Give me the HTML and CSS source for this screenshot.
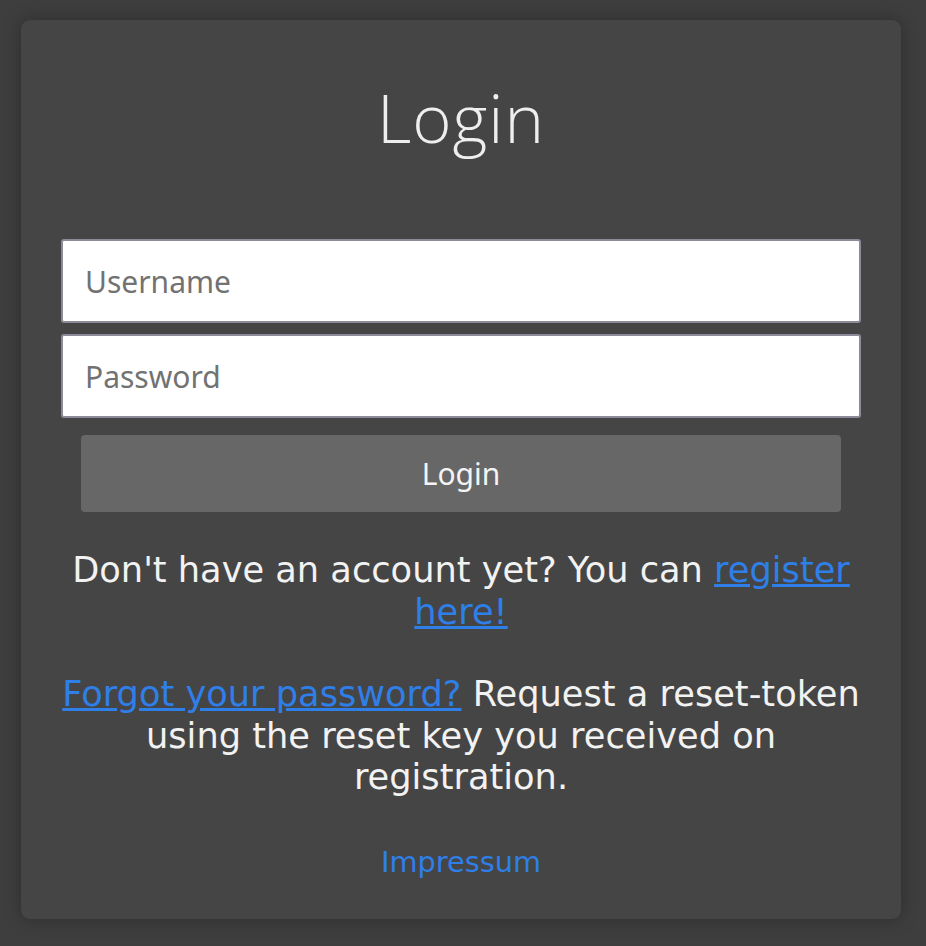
FILE: index.html
```html
<!DOCTYPE html>
<html lang="en">
<head>
<meta charset="utf-8">
<title>Login</title>
<link rel="stylesheet" href="styles.css">
</head>
<body>
<main class="card">
  <h1 class="title">Login</h1>
  <form class="form">
    <input class="field" type="text" placeholder="Username">
    <input class="field" type="password" placeholder="Password">
    <button class="submit" type="button">Login</button>
  </form>
  <p class="note">Don't have an account yet? You can <a href="#">register here!</a></p>
  <p class="note"><a href="#">Forgot your password?</a> Request a reset-token using the reset key you received on registration.</p>
  <a class="impressum" href="#">Impressum</a>
</main>
</body>
</html>
```
FILE: styles.css
```css
html, body {
  margin: 0;
  padding: 0;
}
body {
  background: #3e3e3e;
  font-family: "DejaVu Sans", sans-serif;
  color: #f2f2f2;
  padding: 20px 25px 27px 21px;
}
.card {
  background: #454545;
  border-radius: 9px;
  box-shadow: 0 0 18px rgba(0, 0, 0, 0.28);
  height: 899px;
  box-sizing: border-box;
  padding: 57px 40px 0;
  display: flex;
  flex-direction: column;
  align-items: center;
  text-align: center;
}
.title {
  margin: 0;
  font-family: "Open Sans", sans-serif;
  font-weight: 300;
  font-size: 67px;
  line-height: 80px;
  color: #eeeeee;
  letter-spacing: 1px;
}
.form {
  margin-top: 82px;
  width: 100%;
  display: flex;
  flex-direction: column;
  align-items: center;
  gap: 11px;
}
.field {
  box-sizing: border-box;
  width: 100%;
  height: 84px;
  border: 2px solid #8d8a9a;
  border-radius: 3px;
  background: #ffffff;
  padding: 0 22px;
  font-family: "Noto Sans", sans-serif;
  font-size: 30px;
  color: #333;
  outline: none;
}
.field::placeholder {
  color: #727272;
}
.submit {
  margin-top: 6px;
  width: 760px;
  height: 77px;
  border: none;
  border-radius: 4px;
  background: #676767;
  color: #f4f4f4;
  font-family: "Noto Sans", sans-serif;
  font-size: 30px;
}
.note {
  margin: 37px 0 0;
  font-size: 35.2px;
  line-height: 41.5px;
  color: #f2f2f2;
}
.note + .note {
  margin-top: 41px;
}
.note a {
  color: #2f7fe8;
}
.impressum {
  margin-top: 47px;
  font-size: 28.8px;
  color: #2f7fe8;
  text-decoration: none;
}
```
